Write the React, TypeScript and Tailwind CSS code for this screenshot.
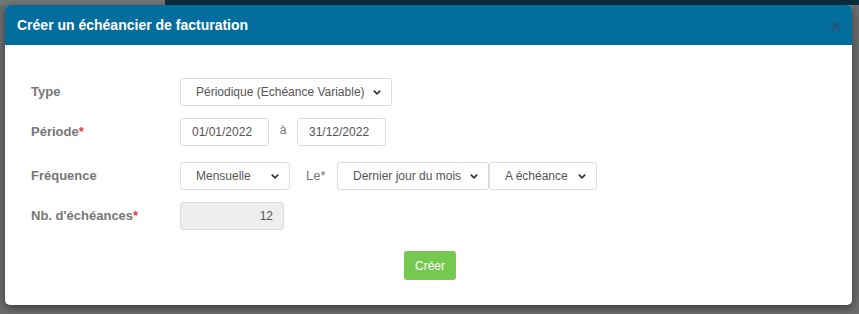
import React from "react";

const Chevron = () => (
  <svg width="10" height="10" viewBox="0 0 10 10" className="shrink-0">
    <path d="M1.8 3.6 L5 6.8 L8.2 3.6" fill="none" stroke="#333" strokeWidth="1.7" />
  </svg>
);

function Select({ value, width }: { value: string; width: string }) {
  return (
    <div
      className={`${width} h-[28px] flex items-center justify-between pl-[15px] pr-[9px] border border-[#dcdcdc] rounded-[3px] bg-white text-[12px] text-[#555]`}
    >
      <span className="whitespace-nowrap">{value}</span>
      <Chevron />
    </div>
  );
}

function Label({ text, req }: { text: string; req?: boolean }) {
  return (
    <div className="w-[149px] shrink-0 text-[13px] font-bold text-[#777]">
      {text}
      {req && <span className="text-[#e53935]">*</span>}
    </div>
  );
}

export default function App() {
  return (
    <div
      className="w-[859px] h-[314px] overflow-hidden bg-[#6c6c6c] flex flex-col"
      style={{ fontFamily: '"Liberation Sans", Arial, sans-serif' }}
    >
      <div className="h-[5px] flex shrink-0">
        <div className="w-[165px] bg-[#747474]" />
        <div className="flex-1 bg-[#0c2c3d]" />
      </div>
      <div className="flex-1 flex pl-[5px] pr-[7px]">
        <div className="w-[847px] h-[300px] bg-white rounded-[5px] overflow-hidden shadow-[0_3px_8px_rgba(0,0,0,0.45)] flex flex-col">
          <div className="h-[40px] bg-[#036d9e] flex items-center justify-between pl-[12px] pr-[11px]">
            <span className="text-white font-bold text-[14px]">Créer un échéancier de facturation</span>
            <svg width="11" height="11" viewBox="0 0 11 11" className="mt-[2px]">
              <path d="M1.5 1.5 L9.5 9.5 M9.5 1.5 L1.5 9.5" stroke="#245877" strokeWidth="2.2" />
            </svg>
          </div>
          <div className="flex flex-col pl-[26px] pt-[33px]">
            <div className="flex items-center h-[28px]">
              <Label text="Type" />
              <Select value="Périodique (Echéance Variable)" width="w-[212px]" />
            </div>
            <div className="flex items-center h-[28px] mt-[12px]">
              <Label text="Période" req />
              <div className="w-[89px] h-[28px] flex items-center pl-[11px] border border-[#dcdcdc] rounded-[3px] text-[12px] text-[#555]">
                01/01/2022
              </div>
              <span className="w-[28px] text-center text-[12px] text-[#777] -mt-[4px]">à</span>
              <div className="w-[89px] h-[28px] flex items-center pl-[11px] border border-[#dcdcdc] rounded-[3px] text-[12px] text-[#555]">
                31/12/2022
              </div>
            </div>
            <div className="flex items-center h-[28px] mt-[16px]">
              <Label text="Fréquence" />
              <Select value="Mensuelle" width="w-[110px]" />
              <span className="w-[47px] pl-[16px] text-[13px] text-[#777]">Le*</span>
              <Select value="Dernier jour du mois" width="w-[152px]" />
              <Select value="A échéance" width="w-[108px]" />
            </div>
            <div className="flex items-center h-[28px] mt-[12px]">
              <Label text="Nb. d'échéances" req />
              <div className="w-[104px] h-[28px] flex items-center justify-end pr-[10px] border border-[#dcdcdc] rounded-[3px] bg-[#eeeeee] text-[12px] text-[#555]">
                12
              </div>
            </div>
            <div className="flex justify-center mt-[21px] pr-[23px]">
              <div className="w-[52px] h-[29px] rounded-[3px] bg-[#76c94f] text-white text-[12px] flex items-center justify-center">
                Créer
              </div>
            </div>
          </div>
        </div>
      </div>
    </div>
  );
}
